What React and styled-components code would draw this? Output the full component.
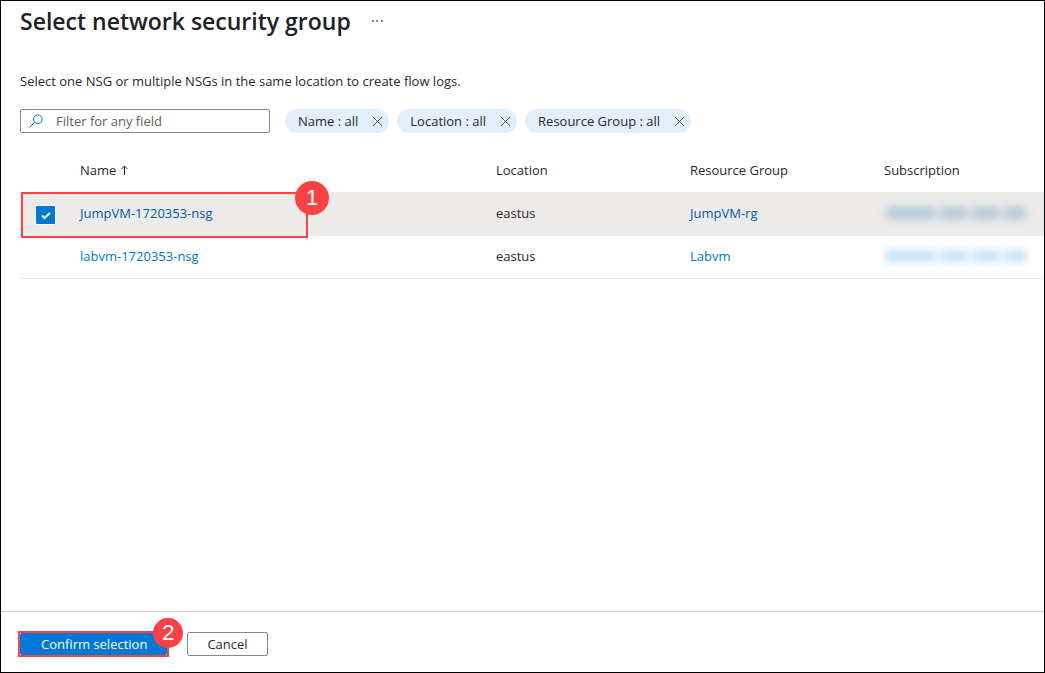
import React, { useState } from "react";
import styled, { createGlobalStyle } from "styled-components";

const GlobalStyle = createGlobalStyle`
  *, *::before, *::after { box-sizing: border-box; }
  body {
    margin: 0;
    background: #fff;
    color: #292827;
    font: 13px/20px "Open Sans", "Noto Sans", sans-serif;
  }
  button, input { font: inherit; color: inherit; }
`;

const Page = styled.div`
  display: flex;
  flex-direction: column;
  min-height: 100vh;
  border: 1px solid #000;
`;

const Main = styled.main`
  flex: 1;
  padding: 4px 0 0 19px;
`;

const Header = styled.header`
  display: flex;
  align-items: center;
  gap: 12px;
`;

const Title = styled.h1`
  margin: 0;
  font-size: 23px;
  line-height: 32px;
  font-weight: 600;
  color: #202026;
`;

const MoreButton = styled.button`
  display: flex;
  padding: 8px;
  border: 0;
  background: none;
`;

const Intro = styled.p`
  margin: 34px 0 18px;
`;

const Filters = styled.div`
  display: flex;
  flex-wrap: wrap;
  align-items: center;
  gap: 8px;
`;

const SearchBox = styled.label`
  display: flex;
  align-items: center;
  gap: 13px;
  width: 250px;
  height: 24px;
  margin-right: 7px;
  padding: 0 8px;
  border: 1px solid #8a8886;
  border-radius: 2px;
`;

const SearchInput = styled.input`
  flex: 1;
  min-width: 0;
  padding: 0;
  border: 0;
  outline: 0;
  background: none;
  &::placeholder { color: #605e5c; opacity: 1; }
`;

const Pill = styled.div`
  display: flex;
  align-items: center;
  gap: 14px;
  height: 24px;
  padding: 0 6px 0 13px;
  border-radius: 12px;
  background: #e3f0fb;
`;

const ClearButton = styled.button`
  display: flex;
  padding: 0;
  border: 0;
  background: none;
`;

const Table = styled.table`
  width: 100%;
  margin-top: 16px;
  border-collapse: separate;
  border-spacing: 0;
  table-layout: fixed;
`;

const Col = styled.col`
  width: ${(p) => p.$width};
`;

const HeadCell = styled.th`
  height: 43px;
  padding: 0 0 2px;
  text-align: left;
  font-weight: 400;
`;

const Row = styled.tr`
  background: ${(p) => (p.$selected ? "#ecebea" : "#fff")};
`;

const Cell = styled.td`
  position: relative;
  height: ${(p) => (p.$last ? "43px" : "44px")};
  padding: 0 0 2px;
  border-bottom: ${(p) => (p.$last ? "1px solid #e6e5e4" : "0")};
`;

const Link = styled.a`
  color: ${(p) => (p.$selected ? "#005a9e" : "#0078d4")};
  text-decoration: none;
`;

const Checkbox = styled.input`
  display: block;
  appearance: none;
  width: 21px;
  height: 20px;
  margin: 3px 0 0 15px;
  border: 1px solid #fff;
  border-radius: 2px;
  background: ${(p) => (p.checked ? "#0078d4" : "#fff")}
    url("data:image/svg+xml,%3Csvg xmlns='http://www.w3.org/2000/svg' viewBox='0 0 18 18'%3E%3Cpath d='M5 9.5l2.5 2.5L13 7' fill='none' stroke='white' stroke-width='2'/%3E%3C/svg%3E")
    center / 18px 18px no-repeat;
`;

const RowOutline = styled.div`
  position: absolute;
  z-index: 1;
  top: 0;
  left: 1px;
  width: 287px;
  height: 46px;
  border: 2px solid #fd4246;
  pointer-events: none;
`;

const Badge = styled.span`
  position: absolute;
  z-index: 2;
  top: ${(p) => p.$top};
  right: ${(p) => p.$right};
  width: ${(p) => p.$size};
  height: ${(p) => p.$size};
  border-radius: 50%;
  background: #fd4246;
  color: #fff;
  text-align: center;
  font: 22px/${(p) => p.$size} "Liberation Sans", Arial, sans-serif;
`;

const Redacted = styled.div`
  display: flex;
  gap: 5px;
  width: 144px;
  height: 14px;
  padding: 1px 2px;
  filter: blur(4px);
  opacity: ${(p) => (p.$selected ? 0.34 : 0.3)};
`;

const RedactedWord = styled.span`
  flex: ${(p) => p.$span};
  background: ${(p) => (p.$selected ? "#4b87b5" : "#3f9fe8")};
`;

const Footer = styled.footer`
  display: flex;
  align-items: center;
  gap: 18px;
  padding: 19px 17px 15px;
  border-top: 1px solid #d2d0ce;
`;

const Confirm = styled.div`
  position: relative;
  border: 2px solid #fd4246;
`;

const Button = styled.button`
  display: block;
  height: ${(p) => (p.$primary ? "22px" : "24px")};
  padding: ${(p) => (p.$primary ? "1px 20px 0 21px" : "1px 19px 0")};
  border: ${(p) => (p.$primary ? "0" : "1px solid #8a8886")};
  border-radius: 2px;
  background: ${(p) => (p.$primary ? "#0078d4" : "#fff")};
  color: ${(p) => (p.$primary ? "#fff" : "#292827")};
  line-height: 21px;
`;

const groups = [
  { name: "JumpVM-1720353-nsg", location: "eastus", group: "JumpVM-rg" },
  { name: "labvm-1720353-nsg", location: "eastus", group: "Labvm" },
];

const words = [49, 28, 27, 22];

export default function App() {
  const [selected, setSelected] = useState(groups[0].name);

  return (
    <>
      <GlobalStyle />
      <Page>
        <Main>
          <Header>
            <Title>Select network security group</Title>
            <MoreButton aria-label="More options">
              <svg width="13" height="3" viewBox="0 0 13 3" fill="#888">
                <rect x="1" y="0" width="2" height="2" />
                <rect x="5" y="0" width="2" height="2" />
                <rect x="10" y="0" width="2" height="2" />
              </svg>
            </MoreButton>
          </Header>
          <Intro>Select one NSG or multiple NSGs in the same location to create flow logs.</Intro>
          <Filters>
            <SearchBox>
              <svg width="14" height="14" viewBox="0 0 14 14" fill="none" stroke="#0078d4">
                <circle cx="8.8" cy="5.2" r="4.3" />
                <path d="M5.7 8.3L.5 13.5" />
              </svg>
              <SearchInput placeholder="Filter for any field" aria-label="Filter for any field" />
            </SearchBox>
            {["Name", "Location", "Resource Group"].map((field) => (
              <Pill key={field}>
                <span>{field} : all</span>
                <ClearButton aria-label={`Clear ${field} filter`}>
                  <svg width="11" height="11" viewBox="0 0 11 11" fill="none" stroke="#555">
                    <path d="M1 1l9 9M10 1l-9 9" />
                  </svg>
                </ClearButton>
              </Pill>
            ))}
          </Filters>
          <Table>
            <colgroup>
              <Col $width="60px" />
              <Col />
              <Col $width="194px" />
              <Col $width="194px" />
              <Col $width="160px" />
            </colgroup>
            <thead>
              <tr>
                <HeadCell />
                <HeadCell>
                  Name{" "}
                  <svg width="9" height="10" viewBox="0 0 9 10" fill="none" stroke="#292827" aria-label="ascending">
                    <path d="M4.5 10V1M1.5 4l3-3 3 3" />
                  </svg>
                </HeadCell>
                <HeadCell>Location</HeadCell>
                <HeadCell>Resource Group</HeadCell>
                <HeadCell>Subscription</HeadCell>
              </tr>
            </thead>
            <tbody>
              {groups.map((g, i) => {
                const on = g.name === selected;
                const last = i === groups.length - 1;
                return (
                  <Row key={g.name} $selected={on} onClick={() => setSelected(g.name)}>
                    <Cell $last={last}>
                      {on && (
                        <>
                          <Checkbox type="checkbox" checked readOnly aria-label={g.name} />
                          <RowOutline>
                            <Badge $size="34px" $top="-13px" $right="-23px">1</Badge>
                          </RowOutline>
                        </>
                      )}
                    </Cell>
                    <Cell $last={last}><Link href="#" $selected={on}>{g.name}</Link></Cell>
                    <Cell $last={last}>{g.location}</Cell>
                    <Cell $last={last}><Link href="#" $selected={on}>{g.group}</Link></Cell>
                    <Cell $last={last}>
                      <Redacted $selected={on}>
                        {words.map((w) => <RedactedWord key={w} $span={w} $selected={on} />)}
                      </Redacted>
                    </Cell>
                  </Row>
                );
              })}
            </tbody>
          </Table>
        </Main>
        <Footer>
          <Confirm>
            <Button $primary>Confirm selection</Button>
            <Badge $size="30px" $top="-15px" $right="-16px">2</Badge>
          </Confirm>
          <Button>Cancel</Button>
        </Footer>
      </Page>
    </>
  );
}
